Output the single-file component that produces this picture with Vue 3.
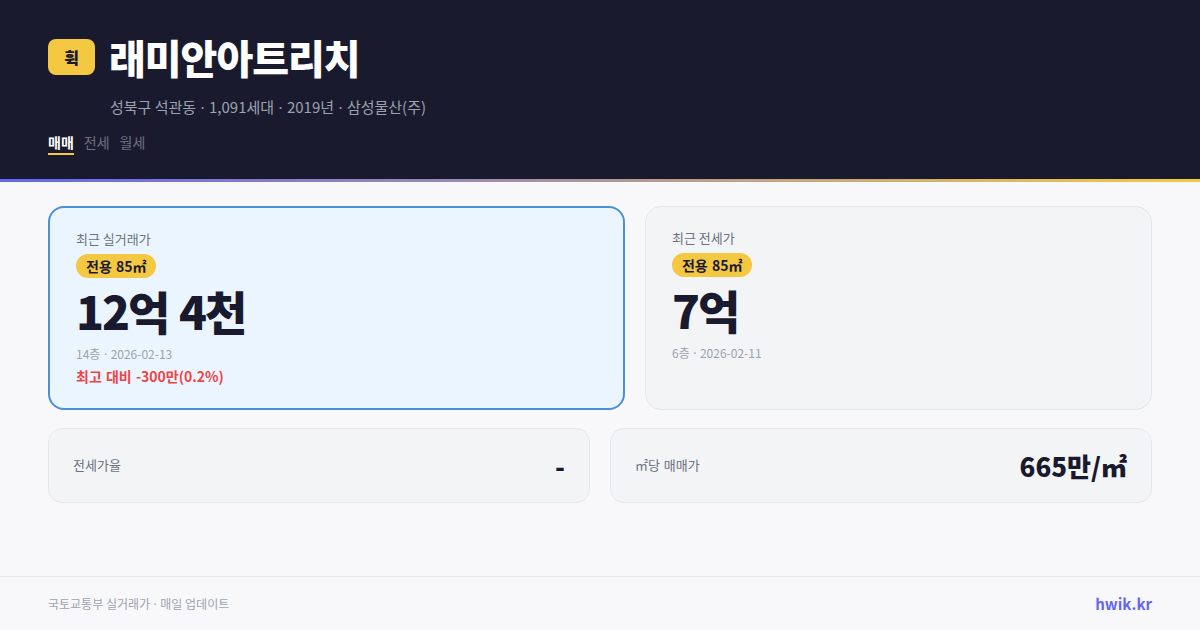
<template>
  <div class="page">
    <header class="head">
      <div class="title-row">
        <span class="logo">휙</span>
        <h1 class="title">래미안아트리치</h1>
      </div>
      <p class="sub">성북구 석관동 <span class="dot">·</span> 1,091세대 <span class="dot">·</span> 2019년 <span class="dot">·</span> 삼성물산(주)</p>
      <nav class="tabs">
        <span
          v-for="tab in tabs"
          :key="tab"
          class="tab"
          :class="{ active: tab === '매매' }"
        >{{ tab }}</span>
      </nav>
    </header>
    <div class="stripe"></div>

    <main class="main">
      <div class="prices">
        <section class="card sale">
          <div class="card-label">최근 실거래가</div>
          <span class="pill">전용 85㎡</span>
          <div class="price">12억 4천</div>
          <div class="meta">14층 <span class="dot">·</span> 2026-02-13</div>
          <div class="diff">최고 대비 -300만(0.2%)</div>
        </section>
        <section class="card rent">
          <div class="card-label">최근 전세가</div>
          <span class="pill">전용 85㎡</span>
          <div class="price">7억</div>
          <div class="meta">6층 <span class="dot">·</span> 2026-02-11</div>
        </section>
      </div>
      <div class="stats">
        <div class="stat">
          <span class="stat-label">전세가율</span>
          <span class="stat-value">-</span>
        </div>
        <div class="stat">
          <span class="stat-label">㎡당 매매가</span>
          <span class="stat-value">665만/㎡</span>
        </div>
      </div>
    </main>

    <footer class="foot">
      <span class="source">국토교통부 실거래가 <span class="dot">·</span> 매일 업데이트</span>
      <span class="brand">hwik.kr</span>
    </footer>
  </div>
</template>

<script setup>
const tabs = ['매매', '전세', '월세']
</script>

<style>
html,
body {
  margin: 0;
  background: #f8f8fb;
}
</style>

<style scoped>
.page {
  width: 1200px;
  height: 630px;
  display: flex;
  flex-direction: column;
  overflow: hidden;
  background: #f8f8fb;
  font-family: "Noto Sans CJK KR", "Noto Sans", sans-serif;
}

.dot {
  margin: 0 0.07em;
  font-family: "Noto Sans", sans-serif;
}

.head {
  height: 179px;
  box-sizing: border-box;
  padding: 34px 48px 0;
  background: #1a1a2e;
}

.title-row {
  display: flex;
  align-items: center;
  gap: 14px;
}

.logo {
  width: 47px;
  height: 36px;
  display: flex;
  align-items: center;
  justify-content: center;
  border-radius: 8px;
  background: #f5c842;
  color: #1a1a2e;
  font-size: 16px;
  font-weight: 900;
}

.title {
  margin: 0;
  color: #fff;
  font-size: 40px;
  font-weight: 900;
  line-height: 46px;
  letter-spacing: -1px;
}

.sub {
  margin: 16px 0 0 62px;
  color: #9ca3af;
  font-size: 15px;
  line-height: 22px;
}

.tabs {
  display: flex;
  gap: 10px;
  margin-top: 14px;
}

.tab {
  color: #6b7280;
  font-size: 14px;
  line-height: 20px;
  padding-bottom: 1px;
}

.tab.active {
  color: #fff;
  font-weight: 700;
  border-bottom: 2px solid #f5c842;
}

.stripe {
  height: 3px;
  background: linear-gradient(90deg, #6366f1, #f5c842);
}

.main {
  flex: 1;
  padding: 24px 48px 0;
}

.prices {
  display: flex;
  gap: 20px;
  height: 204px;
}

.card {
  flex: 1;
  padding: 21px 26px;
  border: 1px solid #e5e7eb;
  border-radius: 16px;
  background: #f3f4f6;
}

.card.sale {
  flex: 1.15;
  border: 2px solid #4a90d9;
  background: #ebf5ff;
}

.card-label {
  color: #6b7280;
  font-size: 13px;
  line-height: 19px;
}

.pill {
  display: inline-block;
  margin-top: 6px;
  padding: 0 10px;
  border-radius: 12px;
  background: #f5c842;
  color: #1a1a2e;
  font-size: 14px;
  font-weight: 700;
  line-height: 24px;
  word-spacing: 1px;
}

.price {
  color: #1a1a2e;
  font-size: 46px;
  font-weight: 900;
  line-height: 64px;
  letter-spacing: -2px;
  word-spacing: 2px;
}

.meta {
  margin-top: 3px;
  color: #9ca3af;
  font-size: 12px;
  line-height: 18px;
}

.diff {
  margin-top: 3px;
  color: #ef4444;
  font-size: 14px;
  font-weight: 700;
  line-height: 19px;
  word-spacing: 1px;
}

.stats {
  display: flex;
  gap: 20px;
  margin-top: 18px;
}

.stat {
  flex: 1;
  height: 75px;
  box-sizing: border-box;
  display: flex;
  align-items: center;
  justify-content: space-between;
  padding: 0 24px;
  border: 1px solid #e5e7eb;
  border-radius: 14px;
  background: #f3f4f6;
}

.stat-label {
  padding-bottom: 2px;
  color: #6b7280;
  font-size: 13px;
  word-spacing: 1px;
}

.stat-value {
  color: #1a1a2e;
  font-size: 26px;
  font-weight: 900;
}

.foot {
  height: 54px;
  box-sizing: border-box;
  display: flex;
  align-items: center;
  justify-content: space-between;
  padding: 0 48px;
  border-top: 1px solid #e5e7eb;
}

.source {
  color: #9ca3af;
  font-size: 12px;
}

.brand {
  color: #6366f1;
  font-size: 15px;
  font-weight: 700;
}
</style>
